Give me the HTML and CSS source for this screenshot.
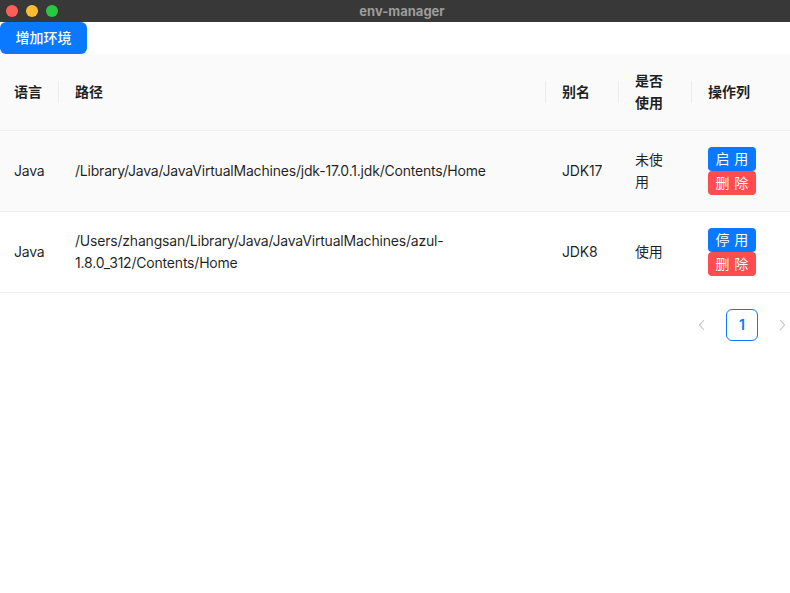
FILE: index.html
```html
<!DOCTYPE html>
<html lang="zh-CN">
<head>
<meta charset="utf-8">
<title>env-manager</title>
<link rel="stylesheet" href="styles.css">
</head>
<body>
<div class="titlebar">
  <div class="lights">
    <span class="light red"></span>
    <span class="light yellow"></span>
    <span class="light green"></span>
  </div>
  <div class="title">env-manager</div>
</div>
<main class="app">
  <div class="toolbar">
    <button class="btn btn-primary">增加环境</button>
  </div>
  <table class="table">
    <colgroup>
      <col class="c1"><col class="c2"><col class="c3"><col class="c4"><col class="c5">
    </colgroup>
    <thead>
      <tr>
        <th class="first">语言</th>
        <th class="sep">路径</th>
        <th class="sep">别名</th>
        <th class="sep">是否使用</th>
        <th class="sep">操作列</th>
      </tr>
    </thead>
    <tbody>
      <tr class="hover">
        <td class="first">Java</td>
        <td>/Library/Java/JavaVirtualMachines/jdk-17.0.1.jdk/Contents/Home</td>
        <td>JDK17</td>
        <td>未使用</td>
        <td>
          <button class="btn btn-sm btn-blue"><span>启用</span></button>
          <button class="btn btn-sm btn-red"><span>删除</span></button>
        </td>
      </tr>
      <tr>
        <td class="first">Java</td>
        <td>/Users/zhangsan/Library/Java/JavaVirtualMachines/azul-1.8.0_312/Contents/Home</td>
        <td>JDK8</td>
        <td>使用</td>
        <td>
          <button class="btn btn-sm btn-blue"><span>停用</span></button>
          <button class="btn btn-sm btn-red"><span>删除</span></button>
        </td>
      </tr>
    </tbody>
  </table>
  <div class="pagination">
    <span class="pg-arrow">
      <svg width="10" height="12" viewBox="0 0 10 12"><path d="M7 1 L2.5 6 L7 11" fill="none" stroke="currentColor" stroke-width="1.1"/></svg>
    </span>
    <span class="pg-item active">1</span>
    <span class="pg-arrow">
      <svg width="10" height="12" viewBox="0 0 10 12"><path d="M3 1 L7.5 6 L3 11" fill="none" stroke="currentColor" stroke-width="1.1"/></svg>
    </span>
  </div>
</main>
</body>
</html>
```
FILE: styles.css
```css
* { box-sizing: border-box; }
html, body {
  margin: 0;
  padding: 0;
  background: #fff;
  overflow: hidden;
  width: 790px;
  height: 593px;
}
body {
  font-family: Inter, "Noto Sans CJK SC", sans-serif;
  font-size: 14px;
  color: rgba(0, 0, 0, 0.88);
}
.titlebar {
  height: 22px;
  background: #383838;
  display: flex;
  align-items: center;
  position: relative;
}
.lights {
  display: flex;
  gap: 8px;
  padding-left: 6px;
}
.light {
  width: 12px;
  height: 12px;
  border-radius: 50%;
  display: block;
}
.red { background: #fe5f57; }
.yellow { background: #febc2e; }
.green { background: #28c840; }
.title {
  flex: 1;
  text-align: center;
  margin-left: -44px;
  color: #9c9c9c;
  font-weight: 700;
  font-size: 13px;
  font-family: Inter, "Noto Sans", sans-serif;
}
.toolbar { height: 32px; }
.btn {
  font-family: inherit;
  border: 1px solid transparent;
  cursor: pointer;
  color: #fff;
}
.btn-primary {
  height: 32px;
  width: 87px;
  padding: 0;
  font-size: 14px;
  font-weight: 500;
  border-radius: 6px;
  background: #0a78ff;
  line-height: 30px;
  text-align: center;
}
.table {
  width: 790px;
  border-collapse: collapse;
  table-layout: fixed;
}
.c1 { width: 59px; }
.c2 { width: 487px; }
.c3 { width: 73px; }
.c4 { width: 73px; }
.c5 { width: 98px; }
th, td {
  padding: 16px;
  line-height: 22px;
  text-align: left;
  vertical-align: middle;
  border-bottom: 1px solid #f0f0f0;
}
td { letter-spacing: -0.2px; }
th {
  background: #fafafa;
  font-weight: 600;
  position: relative;
}
th.first, td.first { padding-left: 14px; padding-right: 0; }
th.sep::before {
  content: "";
  position: absolute;
  left: -1px;
  top: 50%;
  width: 1px;
  height: 22px;
  transform: translateY(-50%);
  background: #ececec;
}
tr.hover td { background: #fafafa; }
.btn-sm {
  display: block;
  height: 24px;
  width: 48px;
  padding: 0;
  font-size: 14px;
  line-height: 22px;
  border-radius: 4px;
  text-align: center;
  white-space: nowrap;
}
.btn-sm span {
  letter-spacing: 0.34em;
  margin-right: -0.34em;
}
.btn-blue { background: #0a78ff; }
.btn-red { background: #ff4d4f; }
.pagination {
  display: flex;
  justify-content: flex-end;
  gap: 8px;
  margin: 16px -8px 0 0;
  align-items: center;
}
.pg-arrow {
  width: 32px;
  height: 32px;
  display: flex;
  align-items: center;
  justify-content: center;
  color: rgba(0, 0, 0, 0.25);
}
.pg-item {
  width: 32px;
  height: 32px;
  line-height: 30px;
  text-align: center;
  border: 1px solid #0a78ff;
  border-radius: 6px;
  color: #0a78ff;
  font-weight: 600;
}
```
